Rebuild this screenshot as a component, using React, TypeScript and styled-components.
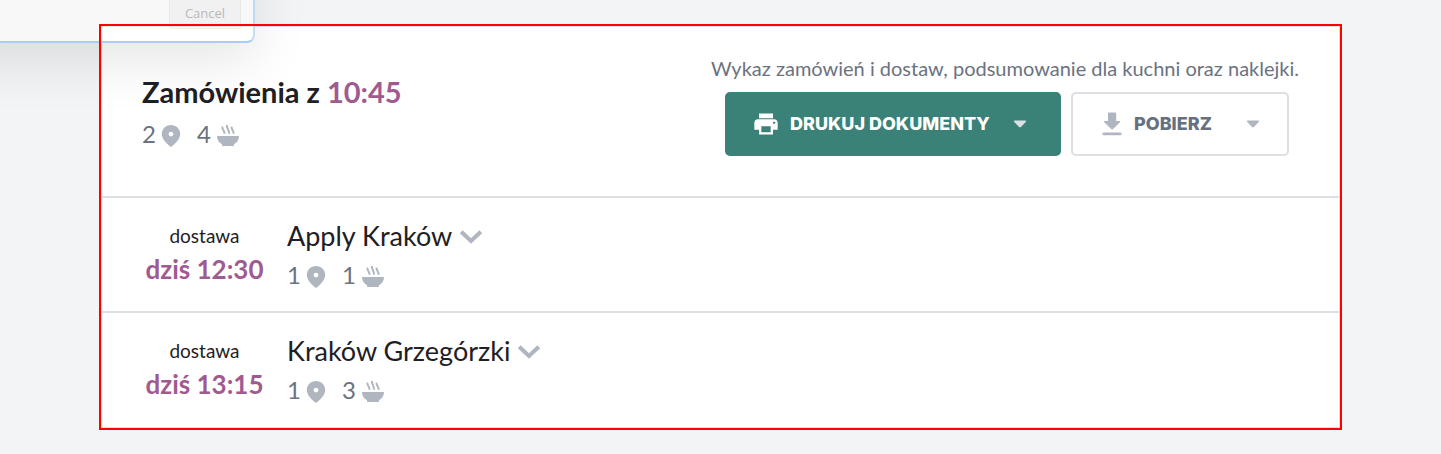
import React from "react";
import styled, { createGlobalStyle } from "styled-components";

const GlobalStyle = createGlobalStyle`
  * { box-sizing: border-box; }
  body {
    margin: 0;
    background: #f3f4f6;
    color: #1f2023;
    font-family: Lato, "Open Sans", sans-serif;
  }
  h1, h2, p { margin: 0; font-weight: 400; }
`;

const Page = styled.main`
  position: relative;
  overflow: hidden;
  padding: 24px 99px;
`;

const Panel = styled.section`
  background: #fff;
  border: 2px solid #f00;
`;

const PanelFrame = styled.div`
  padding-bottom: 1px;
  border: 1px solid #dcdfe3;
`;

const Header = styled.header`
  display: flex;
  justify-content: space-between;
  align-items: flex-start;
  padding: 29px 40px 40px;
`;

const Summary = styled.div`
  padding-top: 16px;
`;

const Title = styled.h1`
  font-size: 29px;
  line-height: 40px;
  font-weight: 700;
`;

const Accent = styled.span`
  color: #9f5b90;
`;

const Stats = styled.div`
  display: flex;
  align-items: center;
  gap: 16px;
  margin-top: 5px;
  height: 34px;
  color: #6b7280;
  font-size: 24px;
  line-height: 34px;
`;

const Stat = styled.span`
  display: flex;
  align-items: center;
  gap: 5px;

  svg { margin-top: 4px; }
`;

const Actions = styled.div`
  display: flex;
  flex-direction: column;
  align-items: flex-end;
`;

const Caption = styled.p`
  color: #6b7280;
  font-size: 20px;
  line-height: 24px;
`;

const Buttons = styled.div`
  display: flex;
  gap: 10px;
  padding: 12px 10px 0 0;
`;

const ActionButton = styled.button<{ $primary?: boolean }>`
  display: flex;
  align-items: center;
  width: ${(p) => (p.$primary ? 336 : 218)}px;
  height: 64px;
  padding: ${(p) => (p.$primary ? "0 32px 0 25px" : "0 27px")};
  border: 2px solid ${(p) => (p.$primary ? "#3a8177" : "#dcdfe3")};
  border-radius: 5px;
  background: ${(p) => (p.$primary ? "#3a8177" : "#fff")};
  color: ${(p) => (p.$primary ? "#fff" : "#667080")};
  font: 800 18px/24px Inter, sans-serif;
  white-space: nowrap;
`;

const ButtonLabel = styled.span`
  flex: 1;
  margin-left: 10px;
  text-align: left;
`;

const Delivery = styled.article`
  display: flex;
  align-items: flex-start;
  padding: 20px 40px 19px;
  border-top: 2px solid #dcdfe3;
`;

const When = styled.div`
  width: 125px;
  text-align: center;
`;

const WhenLabel = styled.p`
  font-size: 19px;
  line-height: 36px;
`;

const WhenTime = styled.p`
  color: #9f5b90;
  font-size: 26px;
  line-height: 30px;
  font-weight: 700;
`;

const Place = styled.div`
  margin-left: 20px;
`;

const PlaceName = styled.h2`
  display: flex;
  align-items: center;
  gap: 7px;
  font-size: 27px;
  line-height: 35px;
`;

const Toggle = styled.button`
  display: flex;
  padding: 2px 0 0;
  border: 0;
  background: none;
`;

const GhostDialog = styled.div`
  position: absolute;
  top: -60px;
  left: -60px;
  width: 315px;
  height: 103px;
  padding: 0 12px 12px 0;
  display: flex;
  justify-content: flex-end;
  align-items: flex-end;
  border: 2px solid rgba(150, 192, 242, 0.8);
  border-right-color: rgba(150, 192, 242, 0.55);
  border-radius: 0 0 8px 0;
  background: rgba(255, 255, 255, 0.4);
  box-shadow: 0 18px 54px rgba(0, 0, 0, 0.1);
`;

const GhostButton = styled.button`
  width: 72px;
  height: 33px;
  border: 1px solid rgba(120, 120, 120, 0.08);
  border-radius: 3px;
  background: rgba(120, 120, 120, 0.05);
  color: #b9b9b9;
  font: 13px/20px "Open Sans", sans-serif;
`;

/* Red highlight edge kept above the translucent dialog */
const Highlight = styled.div`
  position: absolute;
  inset: 24px 99px;
  border: 2px solid #f00;
  pointer-events: none;
`;

const PinIcon = () => (
  <svg width="20" height="24" viewBox="0 0 20 24" fill="#b0b6c0" aria-hidden="true">
    <path
      fillRule="evenodd"
      d="M10 1C4.800 1 .8 4.900 .8 9.900c0 4.900 4.700 9.600 9.200 13.100 4.500-3.500 9.200-8.200 9.200-13.100C19.200 4.900 15.200 1 10 1zm0 6.700a2.400 2.400 0 1 1 0 4.800 2.400 2.400 0 0 1 0-4.800z"
    />
  </svg>
);

const BowlIcon = () => (
  <svg width="24" height="24" viewBox="0 0 24 24" fill="#b0b6c0" aria-hidden="true">
    <path d="M1 12h22c0 3.800-1.900 6.600-5 8.200V21c0 .7-.4 1-1 1H7c-.6 0-1-.3-1-1v-.8C2.900 18.600 1 15.800 1 12z" />
    <path
      d="M6.300 2.600c-.2 3.400 2.300 3.300 2.200 7.200M10.900 1c-.3 4.200 2.300 4.200 2.200 8.800M15.500 2.600c-.2 3.400 2.200 3.300 2.100 7.200"
      fill="none"
      stroke="#b0b6c0"
      strokeWidth="2"
    />
  </svg>
);

const PrintIcon = () => (
  <svg width="28" height="28" viewBox="0 0 24 24" fill="#fff" aria-hidden="true">
    <path d="M19 8H5c-1.660 0-3 1.340-3 3v6h4v4h12v-4h4v-6c0-1.660-1.340-3-3-3zm-3 11H8v-5h8v5zm3-7c-.55 0-1-.45-1-1s.45-1 1-1 1 .45 1 1-.45 1-1 1zm-1-9H6v4h12V3z" />
  </svg>
);

const DownloadIcon = () => (
  <svg width="24" height="24" viewBox="0 0 24 24" fill="#b0b6c0" aria-hidden="true">
    <path d="M9 .5h6.200c.6 0 1 .4 1 1V9h3.300c.7 0 1 .7.500 1.200l-7.200 7c-.4.4-1 .4-1.400 0L4.200 10.200C3.700 9.700 4 9 4.700 9H8V1.500c0-.6.4-1 1-1z" />
    <rect x="2.500" y="20.500" width="19" height="2.800" rx="1" />
  </svg>
);

const CaretIcon = ({ color }: { color: string }) => (
  <svg width="14" height="8" viewBox="0 0 14 8" fill={color} aria-hidden="true">
    <path d="M1.800.5h10.400c.9 0 1.200.9.600 1.500L8.200 6.700c-.7.700-1.700.7-2.400 0L1.200 2C.6 1.400.9.500 1.800.5z" />
  </svg>
);

const ChevronIcon = () => (
  <svg width="24" height="16" viewBox="0 0 24 16" fill="none" aria-hidden="true">
    <path d="M2.200 2.700 12 12l9.800-9.300" stroke="#b0b6c0" strokeWidth="4" />
  </svg>
);

const Counts = ({ places, meals }: { places: number; meals: number }) => (
  <Stats>
    <Stat>{places}<PinIcon /></Stat>
    <Stat>{meals}<BowlIcon /></Stat>
  </Stats>
);

const deliveries = [
  { time: "dziś 12:30", name: "Apply Kraków", places: 1, meals: 1 },
  { time: "dziś 13:15", name: "Kraków Grzegórzki", places: 1, meals: 3 },
];

export default function App() {
  return (
    <>
      <GlobalStyle />
      <Page>
        <Panel>
          <PanelFrame>
            <Header>
              <Summary>
                <Title>Zamówienia z <Accent>10:45</Accent></Title>
                <Counts places={2} meals={4} />
              </Summary>
              <Actions>
                <Caption>Wykaz zamówień i dostaw, podsumowanie dla kuchni oraz naklejki.</Caption>
                <Buttons>
                  <ActionButton type="button" $primary>
                    <PrintIcon />
                    <ButtonLabel>DRUKUJ DOKUMENTY</ButtonLabel>
                    <CaretIcon color="#dcdfe3" />
                  </ActionButton>
                  <ActionButton type="button">
                    <DownloadIcon />
                    <ButtonLabel>POBIERZ</ButtonLabel>
                    <CaretIcon color="#b0b6c0" />
                  </ActionButton>
                </Buttons>
              </Actions>
            </Header>
            {deliveries.map((d) => (
              <Delivery key={d.name}>
                <When>
                  <WhenLabel>dostawa</WhenLabel>
                  <WhenTime>{d.time}</WhenTime>
                </When>
                <Place>
                  <PlaceName>
                    {d.name}
                    <Toggle type="button" aria-label={`Rozwiń ${d.name}`}><ChevronIcon /></Toggle>
                  </PlaceName>
                  <Counts places={d.places} meals={d.meals} />
                </Place>
              </Delivery>
            ))}
          </PanelFrame>
        </Panel>
        <GhostDialog>
          <GhostButton type="button">Cancel</GhostButton>
        </GhostDialog>
        <Highlight />
      </Page>
    </>
  );
}
